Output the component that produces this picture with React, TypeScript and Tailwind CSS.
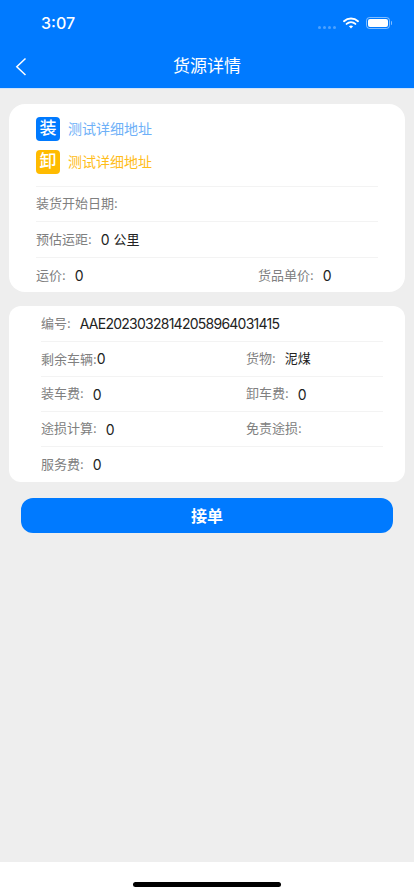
const font = { fontFamily: '"Inter", "Noto Sans CJK SC", sans-serif' };

function Divider() {
  return <div className="h-px bg-[#f3f3f3]" />;
}

function Field({ label, value, unit, className = "" }: { label: string; value?: string; unit?: string; className?: string }) {
  return (
    <div className={`flex items-center text-[13px] whitespace-nowrap ${className}`}>
      <span className="text-[#808080]">{label}</span>
      {value ? <span className="text-[#222222] ml-[9px] text-[14px]">{value}</span> : null}
      {unit ? <span className="text-[#222222] ml-[4px] text-[13px]">{unit}</span> : null}
    </div>
  );
}

function Row({ children, tall = false }: { children: React.ReactNode; tall?: boolean }) {
  return <div className={`flex items-center ${tall ? "h-[35px]" : "h-[34px]"}`}>{children}</div>;
}

function Addr({ tag, color, textColor }: { tag: string; color: string; textColor: string }) {
  return (
    <div className={`flex items-center gap-2 h-6 ${textColor}`}>
      <div className={`w-6 h-6 rounded-[4px] flex items-center justify-center text-white text-[17px] font-medium ${color}`}>{tag}</div>
      <span className="text-[14px] -mt-[2px]">测试详细地址</span>
    </div>
  );
}

export default function App() {
  return (
    <div className="w-[414px] h-[896px] flex flex-col bg-[#eeeeee] overflow-hidden" style={font}>
      <header className="h-[89px] shrink-0 bg-[#007aff] border-b border-[#cfe3fb] flex flex-col text-white">
        <div className="h-11 shrink-0 flex items-center justify-between pl-[41px] pr-[24px]">
          <span className="text-[16px] font-medium leading-none mt-[2px]">3:07</span>
          <div className="flex items-center mt-[1px]">
            <div className="flex gap-[2px] mr-[7px] mt-[9px]">
              <i className="w-[3px] h-[3px] rounded-full bg-white/30" />
              <i className="w-[3px] h-[3px] rounded-full bg-white/30" />
              <i className="w-[3px] h-[3px] rounded-full bg-white/30" />
              <i className="w-[3px] h-[3px] rounded-full bg-white/30" />
            </div>
            <svg width="16" height="12" viewBox="0 0 16 12" fill="none" className="mr-[7px]">
              <path d="M1 4.2C5 .6 11 .6 15 4.2" stroke="white" strokeWidth="1.9" strokeLinecap="round" />
              <path d="M3.6 6.9C6.1 4.7 9.9 4.7 12.4 6.9" stroke="white" strokeWidth="1.9" strokeLinecap="round" />
              <path d="M8 11.6 5.9 9.3C7.1 8.3 8.9 8.3 10.1 9.3Z" fill="white" />
            </svg>
            <div className="relative w-[24px] h-[12px] rounded-[3.5px] border border-white/50 p-[1px]">
              <div className="w-full h-full rounded-[2px] bg-white" />
              <div className="absolute right-[-3px] top-[3px] w-[1.5px] h-1 rounded-r-sm bg-white/50" />
            </div>
          </div>
        </div>
        <div className="relative flex-1 flex items-center justify-center">
          <svg width="12" height="20" viewBox="0 0 12 20" fill="none" className="absolute left-[15px] top-[13px]">
            <path d="M10.5 1.5 1.8 9.8 10.5 18" stroke="white" strokeWidth="1.5" />
          </svg>
          <span className="text-[17px] mt-[2px]">货源详情</span>
        </div>
      </header>

      <main className="flex-1 flex flex-col">
        <section className="mx-[9px] mt-[15px] h-[188px] bg-white rounded-[16px] px-[27px] pt-[13px]">
          <div className="flex flex-col gap-[9px] pb-3">
            <Addr tag="装" color="bg-[#007aff]" textColor="text-[#6db0f8]" />
            <Addr tag="卸" color="bg-[#ffbb00]" textColor="text-[#ffbd1a]" />
          </div>
          <Divider />
          <Row><Field label="装货开始日期:" /></Row>
          <Divider />
          <Row tall><Field label="预估运距:" value="0" unit="公里" /></Row>
          <Divider />
          <Row tall>
            <Field label="运价:" value="0" className="w-[222px]" />
            <Field label="货品单价:" value="0" />
          </Row>
        </section>

        <section className="mx-[9px] mt-[14px] h-[176px] bg-white rounded-[12px] pl-[32px] pr-[22px]">
          <Row tall>
            <div className="flex items-center text-[13px] whitespace-nowrap">
              <span className="text-[#808080]">编号:</span>
              <span className="text-[#222222] ml-[9px] text-[14px] tracking-[-0.75px]">AAE20230328142058964031415</span>
            </div>
          </Row>
          <Divider />
          <Row>
            <div className="w-[205px] text-[13px] text-[#808080]">剩余车辆:<span className="text-[#222222] text-[14px]">0</span></div>
            <div className="flex items-center text-[13px] whitespace-nowrap">
              <span className="text-[#808080]">货物:</span>
              <span className="text-[#222222] ml-[9px]">泥煤</span>
            </div>
          </Row>
          <Divider />
          <Row>
            <Field label="装车费:" value="0" className="w-[205px]" />
            <Field label="卸车费:" value="0" />
          </Row>
          <Divider />
          <Row>
            <Field label="途损计算:" value="0" className="w-[205px]" />
            <Field label="免责途损:" />
          </Row>
          <Divider />
          <Row tall><Field label="服务费:" value="0" /></Row>
        </section>

        <button className="mx-[21px] mt-4 h-[35px] rounded-[12px] bg-[#007aff] text-white text-[16px] font-semibold flex items-center justify-center">
          接单
        </button>
      </main>

      <footer className="h-[34px] shrink-0 bg-white flex justify-center">
        <div className="mt-5 w-[148px] h-[5px] rounded-full bg-black" />
      </footer>
    </div>
  );
}
